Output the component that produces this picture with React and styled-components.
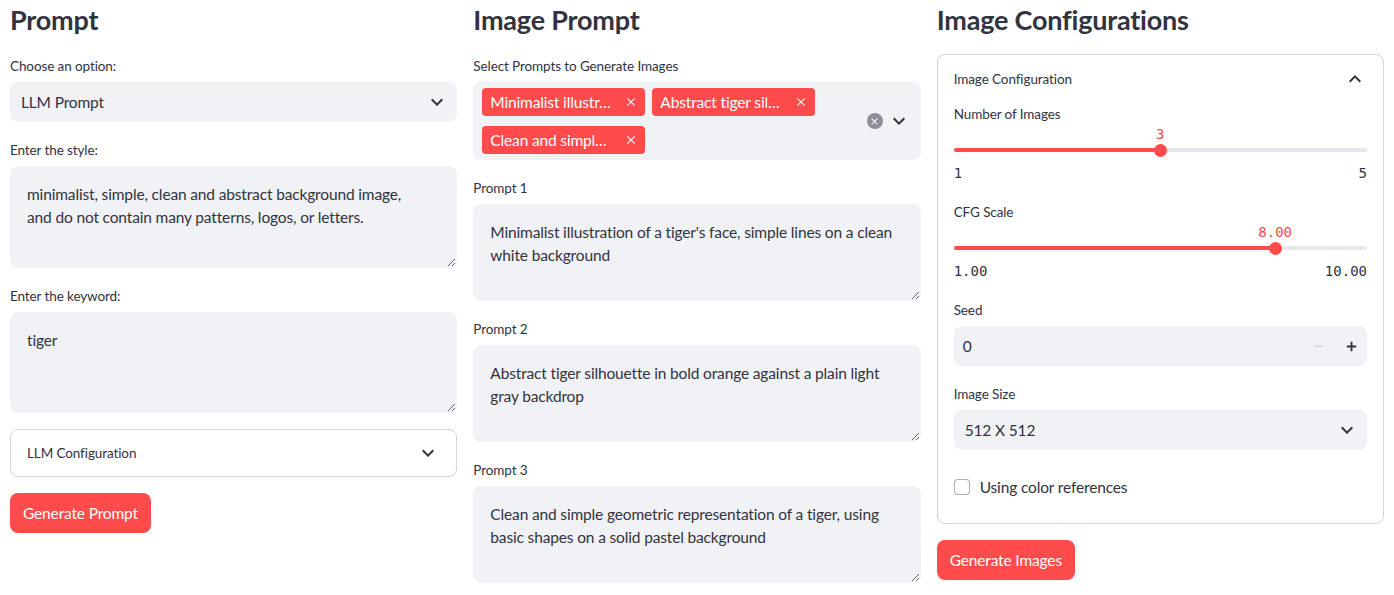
import React from "react";
import styled, { createGlobalStyle } from "styled-components";

const GlobalStyle = createGlobalStyle`
  * { box-sizing: border-box; }
  html, body { margin: 0; padding: 0; background: #ffffff; }
  body {
    font-family: Lato, "Noto Sans", sans-serif;
    color: #31333f;
    -webkit-font-smoothing: antialiased;
  }
`;

const TEXT = "#31333f";
const FIELD = "#f0f2f6";
const RED = "#ff4b4b";
const BORDER = "rgba(49, 51, 63, 0.2)";
const SANS = `Lato, "Noto Sans", sans-serif`;
const MONO = `"DejaVu Sans Mono", "Liberation Mono", monospace`;

const bodyText = `
  font-family: ${SANS};
  font-size: 15.5px;
  letter-spacing: -0.15px;
`;

const smallText = `
  font-size: 13.5px;
  letter-spacing: -0.1px;
`;

const Page = styled.div`
  display: grid;
  grid-template-columns: repeat(3, minmax(0, 1fr));
  column-gap: 16px;
  padding: 0 10px;
  width: 1394px;
`;

const Column = styled.div`
  display: flex;
  flex-direction: column;
  gap: 16px;
  min-width: 0;
`;

const Heading = styled.h2`
  margin: 0;
  height: 38px;
  padding-top: 3px;
  font-size: 27px;
  line-height: 34px;
  font-weight: 700;
  color: ${TEXT};
  letter-spacing: -0.2px;
`;

const Field = styled.div`
  display: flex;
  flex-direction: column;
`;

const Label = styled.div`
  height: 24px;
  margin-bottom: 4px;
  display: flex;
  align-items: center;
  ${smallText}
  color: ${TEXT};
`;

const SelectBox = styled.div`
  height: 40px;
  border-radius: 8px;
  background: ${FIELD};
  display: flex;
  align-items: center;
  justify-content: space-between;
  padding: 0 8px 0 ${(p) => p.$padLeft || 11}px;
  ${bodyText}
  color: ${TEXT};
`;

const TextArea = styled.textarea`
  display: block;
  width: 100%;
  height: ${(p) => p.$h}px;
  resize: vertical;
  border: 1px solid ${FIELD};
  border-radius: 8px;
  background: ${FIELD};
  padding: 16px;
  ${bodyText}
  line-height: 23px;
  color: ${TEXT};
  outline: none;
`;

const Expander = styled.div`
  border: 1px solid ${BORDER};
  border-radius: 8px;
  display: flex;
  flex-direction: column;
`;

const ExpanderHeader = styled.div`
  height: ${(p) => p.$h}px;
  display: flex;
  align-items: center;
  justify-content: space-between;
  padding: 0 16px;
  ${smallText}
  color: ${TEXT};
`;

const ExpanderBody = styled.div`
  display: flex;
  flex-direction: column;
  gap: 16px;
  padding: 0 16px 16px;
`;

const Button = styled.button`
  align-self: flex-start;
  height: 40px;
  padding: 0 13px;
  border: none;
  border-radius: 8px;
  background: ${RED};
  color: #ffffff;
  ${bodyText}
  cursor: pointer;
`;

const MultiSelect = styled.div`
  min-height: 78px;
  border-radius: 8px;
  background: ${FIELD};
  display: flex;
  align-items: center;
  padding: 6px 10px 6px 9px;
`;

const TagList = styled.div`
  flex: 1;
  display: flex;
  flex-wrap: wrap;
  gap: 10px 7px;
  align-content: center;
`;

const Tag = styled.div`
  width: 163px;
  height: 28px;
  border-radius: 4px;
  background: ${RED};
  color: #ffffff;
  display: flex;
  align-items: center;
  justify-content: space-between;
  padding: 0 7px 0 8px;
  ${bodyText}
  white-space: nowrap;
`;

const Controls = styled.div`
  display: flex;
  align-items: center;
  gap: 4px;
`;

const ClearCircle = styled.div`
  width: 16px;
  height: 16px;
  border-radius: 50%;
  background: #8e9099;
  display: flex;
  align-items: center;
  justify-content: center;
`;

const SliderWrap = styled.div`
  display: flex;
  flex-direction: column;
`;

const TrackArea = styled.div`
  position: relative;
  height: 32px;
`;

const Track = styled.div`
  position: absolute;
  left: 0;
  right: 0;
  top: 18px;
  height: 4px;
  border-radius: 2px;
  background: #e6e8ee;
`;

const Fill = styled.div`
  height: 100%;
  border-radius: 2px;
  background: ${RED};
`;

const Thumb = styled.div`
  position: absolute;
  top: 14px;
  width: 13px;
  height: 13px;
  margin-left: -6.5px;
  border-radius: 50%;
  background: ${RED};
`;

const ThumbValue = styled.div`
  position: absolute;
  top: -6px;
  transform: translateX(-50%);
  font-family: ${MONO};
  font-size: 14px;
  line-height: 20px;
  color: ${RED};
  white-space: nowrap;
`;

const Ticks = styled.div`
  height: 22px;
  display: flex;
  justify-content: space-between;
  align-items: center;
  font-family: ${MONO};
  font-size: 14px;
  color: ${TEXT};
`;

const NumberBox = styled.div`
  height: 40px;
  border-radius: 8px;
  background: ${FIELD};
  display: flex;
  align-items: center;
  padding-left: 9px;
  ${bodyText}
  color: ${TEXT};
`;

const NumberValue = styled.div`
  flex: 1;
`;

const StepButton = styled.div`
  width: 32px;
  height: 100%;
  display: flex;
  align-items: center;
  justify-content: center;
`;

const CheckRow = styled.label`
  height: 41px;
  display: flex;
  align-items: center;
  gap: 10px;
  ${bodyText}
  color: ${TEXT};
`;

const CheckBox = styled.span`
  width: 16px;
  height: 16px;
  border: 1px solid rgba(49, 51, 63, 0.4);
  border-radius: 4px;
  background: #ffffff;
`;

const Chevron = ({ up = false, size = 24, color = TEXT }) => (
  <svg width={size} height={size} viewBox="0 0 24 24" fill={color}>
    {up ? (
      <path d="M12 8l-6 6 1.41 1.41L12 10.83l4.59 4.58L18 14z" />
    ) : (
      <path d="M16.59 8.59L12 13.17 7.41 8.59 6 10l6 6 6-6z" />
    )}
  </svg>
);

const CloseIcon = ({ size = 14, color = "#fff" }) => (
  <svg width={size} height={size} viewBox="0 0 24 24" fill={color}>
    <path d="M19 6.41L17.59 5 12 10.59 6.41 5 5 6.41 10.59 12 5 17.59 6.41 19 12 13.41 17.59 19 19 17.59 13.41 12z" />
  </svg>
);

const Slider = ({ min, max, value, format }) => {
  const pct = ((value - min) / (max - min)) * 100;
  return (
    <SliderWrap>
      <TrackArea>
        <Track>
          <Fill style={{ width: `${pct}%` }} />
        </Track>
        <Thumb style={{ left: `${pct}%` }} />
        <ThumbValue style={{ left: `${pct}%` }}>{format(value)}</ThumbValue>
      </TrackArea>
      <Ticks>
        <span>{format(min)}</span>
        <span>{format(max)}</span>
      </Ticks>
    </SliderWrap>
  );
};

const prompts = [
  {
    label: "Prompt 1",
    tag: "Minimalist illustr…",
    text: "Minimalist illustration of a tiger's face, simple lines on a clean white background",
  },
  {
    label: "Prompt 2",
    tag: "Abstract tiger sil…",
    text: "Abstract tiger silhouette in bold orange against a plain light gray backdrop",
  },
  {
    label: "Prompt 3",
    tag: "Clean and simpl…",
    text: "Clean and simple geometric representation of a tiger, using basic shapes on a solid pastel background",
  },
];

export default function App() {
  return (
    <>
      <GlobalStyle />
      <Page>
        <Column>
          <Heading>Prompt</Heading>
          <Field>
            <Label>Choose an option:</Label>
            <SelectBox>
              <span>LLM Prompt</span>
              <Chevron />
            </SelectBox>
          </Field>
          <Field>
            <Label>Enter the style:</Label>
            <TextArea
              $h={102}
              defaultValue={"minimalist, simple, clean and abstract background image,\nand do not contain many patterns, logos, or letters."}
            />
          </Field>
          <Field>
            <Label>Enter the keyword:</Label>
            <TextArea $h={101} defaultValue="tiger" />
          </Field>
          <Expander>
            <ExpanderHeader $h={46}>
              <span>LLM Configuration</span>
              <Chevron />
            </ExpanderHeader>
          </Expander>
          <Button>Generate Prompt</Button>
        </Column>

        <Column>
          <Heading>Image Prompt</Heading>
          <Field>
            <Label>Select Prompts to Generate Images</Label>
            <MultiSelect>
              <TagList>
                {prompts.map((p) => (
                  <Tag key={p.label}>
                    <span>{p.tag}</span>
                    <CloseIcon />
                  </Tag>
                ))}
              </TagList>
              <Controls>
                <ClearCircle>
                  <CloseIcon size={11} />
                </ClearCircle>
                <Chevron />
              </Controls>
            </MultiSelect>
          </Field>
          {prompts.map((p) => (
            <Field key={p.label}>
              <Label>{p.label}</Label>
              <TextArea $h={97} defaultValue={p.text} />
            </Field>
          ))}
        </Column>

        <Column>
          <Heading>Image Configurations</Heading>
          <Expander>
            <ExpanderHeader $h={47}>
              <span>Image Configuration</span>
              <Chevron up />
            </ExpanderHeader>
            <ExpanderBody>
              <Field>
                <Label>Number of Images</Label>
                <Slider min={1} max={5} value={3} format={(v) => String(v)} />
              </Field>
              <Field>
                <Label>CFG Scale</Label>
                <Slider min={1} max={10} value={8} format={(v) => v.toFixed(2)} />
              </Field>
              <Field>
                <Label>Seed</Label>
                <NumberBox>
                  <NumberValue>0</NumberValue>
                  <StepButton>
                    <svg width="14" height="14" viewBox="0 0 24 24" fill="#c9ccd3">
                      <path d="M19 13H5v-2h14v2z" />
                    </svg>
                  </StepButton>
                  <StepButton>
                    <svg width="15" height="15" viewBox="0 0 24 24" fill={TEXT}>
                      <path d="M19.5 13.5h-6v6h-3v-6h-6v-3h6v-6h3v6h6z" />
                    </svg>
                  </StepButton>
                </NumberBox>
              </Field>
              <Field>
                <Label>Image Size</Label>
                <SelectBox $padLeft={11}>
                  <span>512 X 512</span>
                  <Chevron />
                </SelectBox>
              </Field>
              <CheckRow>
                <CheckBox />
                <span>Using color references</span>
              </CheckRow>
            </ExpanderBody>
          </Expander>
          <Button>Generate Images</Button>
        </Column>
      </Page>
    </>
  );
}
